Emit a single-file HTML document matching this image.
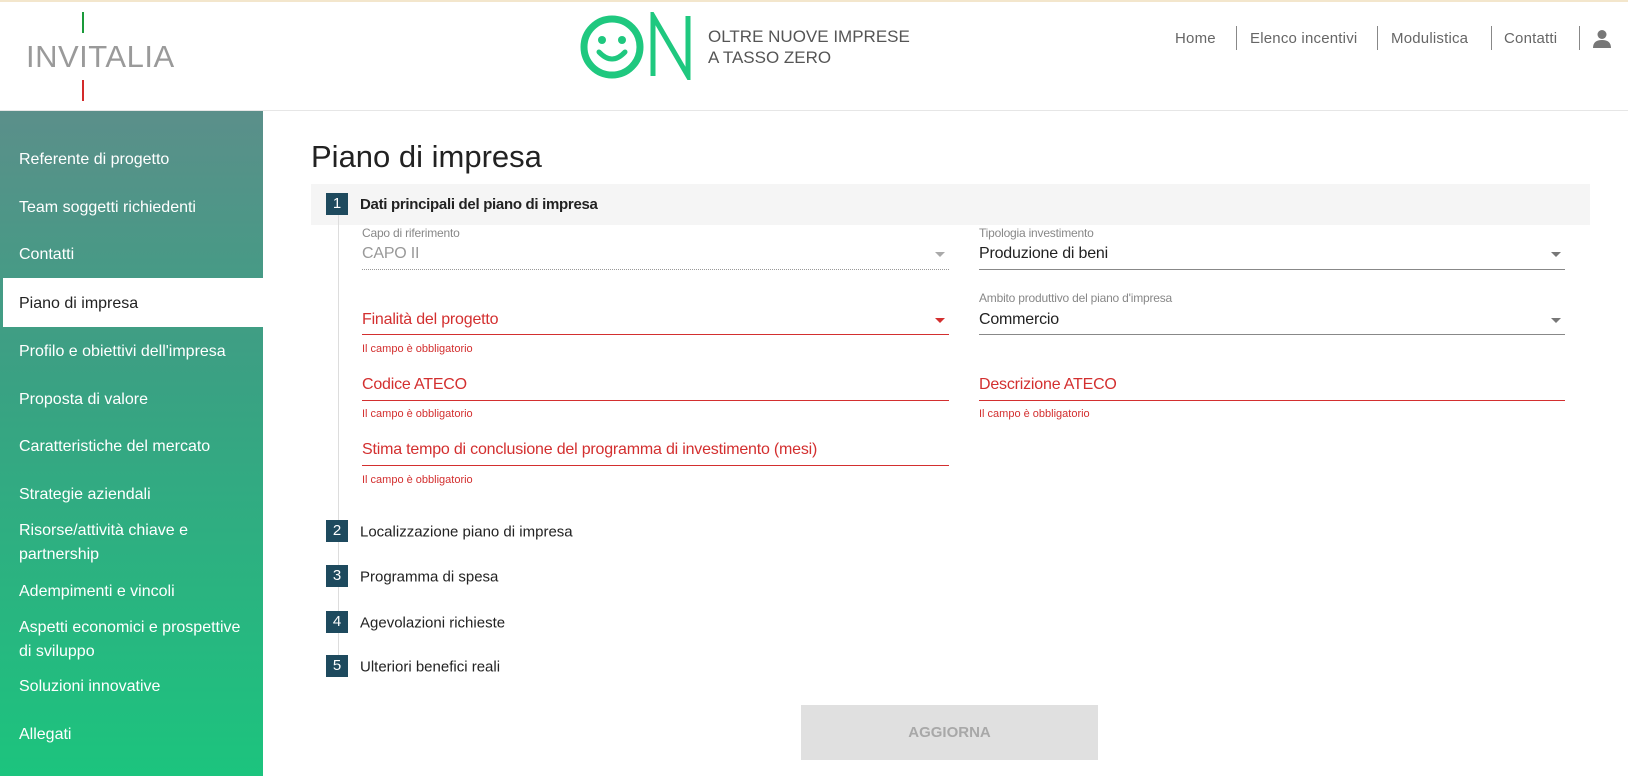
<!DOCTYPE html>
<html><head><meta charset="utf-8"><style>
*{margin:0;padding:0;box-sizing:border-box}
body{width:1628px;height:776px;overflow:hidden;background:#fff;font-family:"Liberation Sans",Arial,sans-serif;position:relative}
.a{position:absolute;white-space:nowrap}
.sb{position:absolute;left:0;top:111px;width:263px;height:665px;background:linear-gradient(180deg,#5b8f8a 0%,#3aa183 40%,#1cc47e 100%)}
.si{position:absolute;left:19px;color:#fff;font-size:16px;line-height:24px;transform:translateY(-50%)}
.nav{position:absolute;top:30px;font-size:15px;color:#666;letter-spacing:.2px}
.sep{position:absolute;top:26px;width:1px;height:24px;background:#888}
.lbl{position:absolute;font-size:12px;color:#888;letter-spacing:-.2px}
.val{position:absolute;font-size:16px;color:#222;letter-spacing:-.2px}
.red{color:#d32f2f}
.err{position:absolute;font-size:11px;color:#d32f2f}
.ln{position:absolute;height:1px;background:#888}
.rl{position:absolute;height:1px;background:#d32f2f}
.arr{position:absolute;width:0;height:0;border-left:5px solid transparent;border-right:5px solid transparent;border-top:5px solid #777}
.num{position:absolute;left:326px;width:22px;height:22px;background:#1e4a5e;color:#fff;font-size:15px;text-align:center;line-height:22px}
.st{position:absolute;left:360px;font-size:15px;color:#222;transform:translateY(-50%)}
</style></head><body>
<div class="a" style="left:0;top:0;width:1628px;height:2px;background:#f3e6cc"></div>
<div class="a" style="left:0;top:110px;width:1628px;height:1px;background:#e6e6e6"></div>
<!-- invitalia -->
<div class="a" style="left:82px;top:12px;width:2px;height:21px;background:#1a9a3a"></div>
<div class="a" style="left:82px;top:80px;width:2px;height:21px;background:#d32a2a"></div>
<div class="a" style="left:26px;top:39px;font-size:31px;color:#9a9a9a;letter-spacing:.5px">INVITALIA</div>
<!-- ON logo -->
<svg class="a" style="left:578px;top:12px" width="120" height="68" viewBox="0 0 120 68">
<circle cx="34" cy="35" r="28" fill="none" stroke="#1fc87f" stroke-width="7"/>
<circle cx="24" cy="28" r="4" fill="#1fc87f"/><circle cx="44" cy="28" r="4" fill="#1fc87f"/>
<path d="M21 40 Q34 54 47 40" fill="none" stroke="#1fc87f" stroke-width="5" stroke-linecap="round"/>
<path d="M75 64 V4 L110 64 V4" fill="none" stroke="#1fc87f" stroke-width="5"/>
</svg>
<div class="a" style="left:708px;top:26px;font-size:17px;color:#555;line-height:21px">OLTRE NUOVE IMPRESE<br>A TASSO ZERO</div>
<!-- nav -->
<div class="nav" style="left:1175px">Home</div>
<div class="sep" style="left:1236px"></div>
<div class="nav" style="left:1250px">Elenco incentivi</div>
<div class="sep" style="left:1377px"></div>
<div class="nav" style="left:1391px">Modulistica</div>
<div class="sep" style="left:1491px"></div>
<div class="nav" style="left:1504px">Contatti</div>
<div class="sep" style="left:1579px"></div>
<svg class="a" style="left:1593px;top:29px" width="18" height="20" viewBox="0 0 18 20"><circle cx="9" cy="5.5" r="4.5" fill="#777"/><path d="M0 19 Q0 11 9 11 Q18 11 18 19Z" fill="#777"/></svg>
<!-- sidebar -->
<div class="sb"></div>
<div class="a" style="left:3px;top:278px;width:260px;height:49px;background:#fff"></div>
<div class="si" style="top:160px">Referente di progetto</div>
<div class="si" style="top:208px">Team soggetti richiedenti</div>
<div class="si" style="top:255px">Contatti</div>
<div class="si" style="top:304px;color:#222">Piano di impresa</div>
<div class="si" style="top:352px">Profilo e obiettivi dell'impresa</div>
<div class="si" style="top:400px">Proposta di valore</div>
<div class="si" style="top:447px">Caratteristiche del mercato</div>
<div class="si" style="top:495px">Strategie aziendali</div>
<div class="si" style="top:543px">Risorse/attività chiave e<br>partnership</div>
<div class="si" style="top:592px">Adempimenti e vincoli</div>
<div class="si" style="top:640px">Aspetti economici e prospettive<br>di sviluppo</div>
<div class="si" style="top:687px">Soluzioni innovative</div>
<div class="si" style="top:735px">Allegati</div>
<!-- main -->
<div class="a" style="left:311px;top:139px;font-size:31px;color:#222">Piano di impresa</div>
<div class="a" style="left:311px;top:184px;width:1279px;height:41px;background:#f5f5f5"></div>
<div class="a" style="left:338px;top:215px;width:1px;height:460px;background:#ddd"></div>
<div class="num" style="top:193px">1</div>
<div class="a" style="left:360px;top:196px;font-size:15px;font-weight:bold;color:#222;letter-spacing:-.3px">Dati principali del piano di impresa</div>
<!-- left column -->
<div class="lbl" style="left:362px;top:226px">Capo di riferimento</div>
<div class="val" style="left:362px;top:245px;color:#999">CAPO II</div>
<div class="arr" style="left:935px;top:252px;border-top-color:#aaa"></div>
<div class="a" style="left:362px;top:269px;width:587px;border-top:1px dotted #999"></div>

<div class="val red" style="left:362px;top:311px">Finalità del progetto</div>
<div class="arr" style="left:935px;top:318px;border-top-color:#d32f2f"></div>
<div class="rl" style="left:362px;top:334px;width:587px"></div>
<div class="err" style="left:362px;top:343px">Il campo è obbligatorio</div>

<div class="val red" style="left:362px;top:376px">Codice ATECO</div>
<div class="rl" style="left:362px;top:400px;width:587px"></div>
<div class="err" style="left:362px;top:408px">Il campo è obbligatorio</div>

<div class="val red" style="left:362px;top:441px">Stima tempo di conclusione del programma di investimento (mesi)</div>
<div class="rl" style="left:362px;top:465px;width:587px"></div>
<div class="err" style="left:362px;top:474px">Il campo è obbligatorio</div>
<!-- right column -->
<div class="lbl" style="left:979px;top:226px">Tipologia investimento</div>
<div class="val" style="left:979px;top:245px">Produzione di beni</div>
<div class="arr" style="left:1551px;top:252px"></div>
<div class="ln" style="left:979px;top:269px;width:586px"></div>

<div class="lbl" style="left:979px;top:291px">Ambito produttivo del piano d'impresa</div>
<div class="val" style="left:979px;top:311px">Commercio</div>
<div class="arr" style="left:1551px;top:318px"></div>
<div class="ln" style="left:979px;top:334px;width:586px"></div>

<div class="val red" style="left:979px;top:376px">Descrizione ATECO</div>
<div class="rl" style="left:979px;top:400px;width:586px"></div>
<div class="err" style="left:979px;top:408px">Il campo è obbligatorio</div>
<!-- steps -->
<div class="num" style="top:520px">2</div><div class="st" style="top:532px">Localizzazione piano di impresa</div>
<div class="num" style="top:565px">3</div><div class="st" style="top:577px">Programma di spesa</div>
<div class="num" style="top:611px">4</div><div class="st" style="top:623px">Agevolazioni richieste</div>
<div class="num" style="top:655px">5</div><div class="st" style="top:667px">Ulteriori benefici reali</div>
<div class="a" style="left:801px;top:705px;width:297px;height:55px;background:#e0e0e0;color:#a8a8a8;font-size:15px;font-weight:bold;text-align:center;line-height:55px">AGGIORNA</div>
</body></html>
